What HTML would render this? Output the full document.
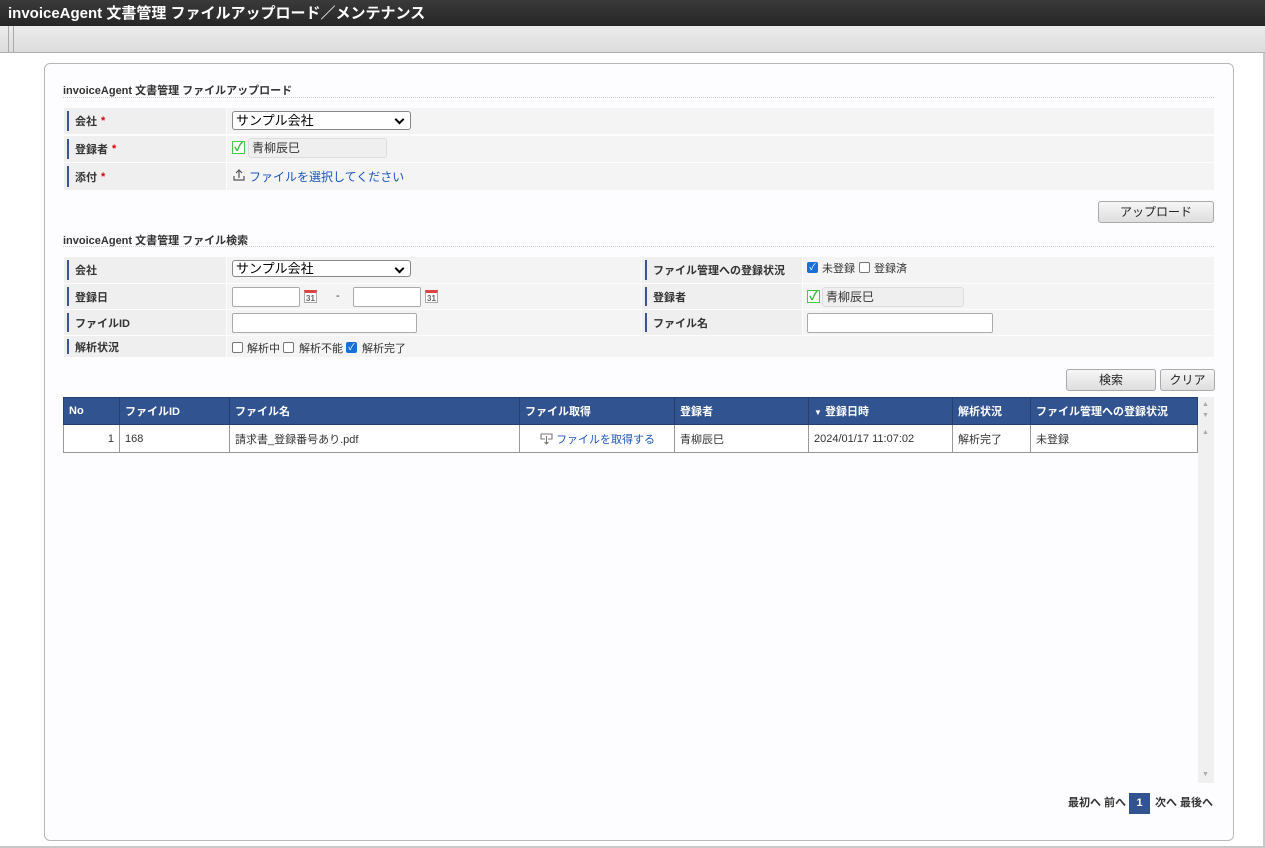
<!DOCTYPE html>
<html><head><meta charset="utf-8"><style>
*{box-sizing:border-box;margin:0;padding:0}
body{width:1265px;height:848px;overflow:hidden;background:#fff;font-family:"Liberation Sans","Noto Sans CJK JP",sans-serif;font-size:12px;color:#333;position:relative}
.a{position:absolute}
#title{left:0;top:0;width:1265px;height:26px;background:linear-gradient(#3a3a3a,#262626);color:#fff;font-weight:bold;font-size:15px;line-height:27px;padding-left:8px}
#tool{left:0;top:26px;width:1265px;height:27px;background:linear-gradient(#ececec,#dcdcdc);border-bottom:1px solid #b0b0b0}
#frame{left:0;top:53px;width:1265px;height:795px;border-right:2px solid #c8c8c8;border-bottom:2px solid #c8c8c8}
#panel{left:44px;top:63px;width:1190px;height:778px;border:1px solid #b8b8b8;border-radius:6px;background:#fdfdff}
.st{font-size:11px;font-weight:bold;color:#333;left:63px}
.dot{left:63px;width:1151px;border-top:1px dotted #ccc;height:0}
.lab{background:#efefef;font-size:11px;font-weight:bold;padding-left:11px;display:flex;align-items:center}
.lab:before{content:"";position:absolute;left:3px;top:3px;bottom:3px;width:2px;background:#3a5590}
.val{background:#f4f4f4}
.req{color:#d00;margin-left:4px}
.sel{background:#fff;border:1px solid #888;border-radius:3px;font-size:13px;color:#000;padding-left:3px;line-height:17px}
.sel:after{content:"";position:absolute;right:7px;top:4px;width:5px;height:5px;border-right:2px solid #000;border-bottom:2px solid #000;transform:rotate(45deg)}
.inp{background:#fff;border:1px solid #aaa;border-radius:2px}
.ro{background:#efefef;border:1px solid #ddd;border-radius:3px;font-size:12px;padding-left:3px;line-height:18px;color:#333}
.gchk{width:13px;height:13px;border:1px solid #4c4;background:#fff;color:#3b3;font-size:12px;line-height:11px;text-align:center;font-weight:bold}
.btn{background:linear-gradient(#f6f6f6,#dedede);border:1px solid #aaa;border-radius:3px;text-align:center;font-size:12px;line-height:20px;color:#222}
.cb{width:11px;height:11px;border:1px solid #777;border-radius:2px;background:#fff}
.cbc{width:11px;height:11px;border-radius:2px;background:#1a6fd6;color:#fff;font-size:9px;line-height:11px;text-align:center}
.lk{color:#1a55c0}
th,td{font-size:11px;text-align:left;padding:0 5px;white-space:nowrap}
table{border-collapse:collapse;position:absolute;left:63px;top:397px;width:1135px}
th{background:#31538f;color:#fff;height:27px;border:1px solid #243f70;font-weight:bold}
td{height:28px;border:1px solid #999;background:#fff;color:#333}
.cal{width:13px;height:13px;border:1px solid #aaa;background:#fff;font-size:8px;text-align:center;line-height:11px;font-weight:bold;color:#666;border-top:3px solid #d44}
</style></head><body>
<div class="a" id="title">invoiceAgent 文書管理 ファイルアップロード／メンテナンス</div>
<div class="a" id="tool"><div class="a" style="left:8px;top:0;width:1px;height:26px;background:#aaa"></div><div class="a" style="left:13px;top:0;width:1px;height:26px;background:#aaa"></div></div>
<div class="a" id="frame"></div>
<div class="a" id="panel"></div>

<div class="a st" style="top:82px">invoiceAgent 文書管理 ファイルアップロード</div>
<div class="a dot" style="top:97px"></div>

<div class="a lab" style="left:64px;top:108px;width:162px;height:26px">会社<span class="req">*</span></div>
<div class="a val" style="left:227px;top:108px;width:987px;height:26px"></div>
<div class="a sel" style="left:232px;top:111px;width:179px;height:19px">サンプル会社</div>
<div class="a lab" style="left:64px;top:136px;width:162px;height:26px">登録者<span class="req">*</span></div>
<div class="a val" style="left:227px;top:136px;width:987px;height:26px"></div>
<div class="a gchk" style="left:232px;top:141px">✓</div>
<div class="a ro" style="left:248px;top:138px;width:139px;height:20px">青柳辰巳</div>
<div class="a lab" style="left:64px;top:163px;width:162px;height:27px">添付<span class="req">*</span></div>
<div class="a val" style="left:227px;top:163px;width:987px;height:27px"></div>
<svg class="a" style="left:232px;top:168px" width="14" height="14" viewBox="0 0 14 14" fill="none" stroke="#555" stroke-width="1.2"><path d="M7 10V2M4 5l3-3 3 3M2 8v4h10V8"/></svg>
<div class="a lk" style="left:249px;top:168px;font-size:12px">ファイルを選択してください</div>

<div class="a btn" style="left:1098px;top:201px;width:116px;height:22px">アップロード</div>

<div class="a st" style="top:232px">invoiceAgent 文書管理 ファイル検索</div>
<div class="a dot" style="top:246px"></div>

<div class="a lab" style="left:64px;top:257px;width:162px;height:26px">会社</div>
<div class="a val" style="left:227px;top:257px;width:414px;height:26px"></div>
<div class="a sel" style="left:232px;top:260px;width:179px;height:17px;line-height:15px">サンプル会社</div>
<div class="a lab" style="left:642px;top:257px;width:160px;height:26px">ファイル管理への登録状況</div>
<div class="a val" style="left:803px;top:257px;width:411px;height:26px"></div>
<div class="a cbc" style="left:807px;top:262px">✓</div>
<div class="a" style="left:822px;top:260px;font-size:11px">未登録</div>
<div class="a cb" style="left:859px;top:262px"></div>
<div class="a" style="left:874px;top:260px;font-size:11px">登録済</div>

<div class="a lab" style="left:64px;top:284px;width:162px;height:25px">登録日</div>
<div class="a val" style="left:227px;top:284px;width:414px;height:25px"></div>
<div class="a inp" style="left:232px;top:287px;width:68px;height:20px"></div>
<div class="a cal" style="left:304px;top:290px">31</div>
<div class="a" style="left:336px;top:290px;font-size:11px">-</div>
<div class="a inp" style="left:353px;top:287px;width:68px;height:20px"></div>
<div class="a cal" style="left:425px;top:290px">31</div>
<div class="a lab" style="left:642px;top:284px;width:160px;height:25px">登録者</div>
<div class="a val" style="left:803px;top:284px;width:411px;height:25px"></div>
<div class="a gchk" style="left:807px;top:290px">✓</div>
<div class="a ro" style="left:822px;top:287px;width:142px;height:20px">青柳辰巳</div>

<div class="a lab" style="left:64px;top:310px;width:162px;height:25px">ファイルID</div>
<div class="a val" style="left:227px;top:310px;width:414px;height:25px"></div>
<div class="a inp" style="left:232px;top:313px;width:185px;height:20px"></div>
<div class="a lab" style="left:642px;top:310px;width:160px;height:25px">ファイル名</div>
<div class="a val" style="left:803px;top:310px;width:411px;height:25px"></div>
<div class="a inp" style="left:807px;top:313px;width:186px;height:20px"></div>

<div class="a lab" style="left:64px;top:336px;width:162px;height:21px">解析状況</div>
<div class="a val" style="left:227px;top:336px;width:987px;height:21px"></div>
<div class="a cb" style="left:232px;top:342px"></div>
<div class="a" style="left:247px;top:340px;font-size:11px">解析中</div>
<div class="a cb" style="left:283px;top:342px"></div>
<div class="a" style="left:299px;top:340px;font-size:11px">解析不能</div>
<div class="a cbc" style="left:346px;top:342px">✓</div>
<div class="a" style="left:362px;top:340px;font-size:11px">解析完了</div>

<div class="a btn" style="left:1066px;top:369px;width:90px;height:22px">検索</div>
<div class="a btn" style="left:1160px;top:369px;width:55px;height:22px">クリア</div>

<div class="a" style="left:1198px;top:397px;width:16px;height:386px;background:#f0f0f0"></div>
<div class="a" style="left:1202px;top:401px;font-size:7px;color:#aaa">▲</div>
<div class="a" style="left:1202px;top:412px;font-size:7px;color:#aaa">▼</div>
<div class="a" style="left:1202px;top:429px;font-size:7px;color:#aaa">▲</div>
<div class="a" style="left:1202px;top:771px;font-size:7px;color:#aaa">▼</div>

<table>
<tr><th style="width:56px">No</th><th style="width:110px">ファイルID</th><th style="width:290px">ファイル名</th><th style="width:155px">ファイル取得</th><th style="width:134px">登録者</th><th style="width:144px"><span style="font-size:8px">▼</span> 登録日時</th><th style="width:78px">解析状況</th><th>ファイル管理への登録状況</th></tr>
<tr><td style="text-align:right">1</td><td>168</td><td>請求書_登録番号あり.pdf</td><td style="padding-left:20px"><svg width="13" height="12" viewBox="0 0 13 12" fill="none" stroke="#777" stroke-width="1.1" style="vertical-align:-2px"><path d="M1 1h11v5H8M5 6H1V1M6.5 3v8M4.5 9l2 2 2-2"/></svg> <span class="lk">ファイルを取得する</span></td><td>青柳辰巳</td><td>2024/01/17 11:07:02</td><td>解析完了</td><td>未登録</td></tr>
</table>

<div class="a" style="left:1068px;top:796px;font-size:11px;font-weight:bold;line-height:14px">最初へ 前へ</div>
<div class="a" style="left:1129px;top:793px;width:21px;height:21px;background:#31538f;color:#fff;font-weight:bold;font-size:11px;text-align:center;line-height:21px">1</div>
<div class="a" style="left:1155px;top:796px;font-size:11px;font-weight:bold;line-height:14px">次へ 最後へ</div>
</body></html>
